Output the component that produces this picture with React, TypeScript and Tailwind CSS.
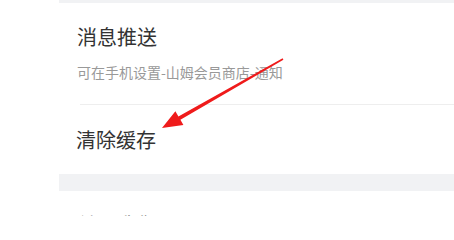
import React from "react";

export default function App() {
  return (
    <div
      className="relative w-[454px] h-[216px] overflow-hidden bg-white flex items-start"
      style={{ fontFamily: '"Noto Sans CJK SC", "Noto Sans", sans-serif' }}
    >
      <div className="w-[59px] shrink-0 bg-white" />
      <div className="flex-1 flex flex-col">
        <div className="h-[3px] shrink-0 bg-[#f1f2f4]" />
        <div className="shrink-0 pt-[24px] pl-[18px]">
          <div className="text-[20px] leading-[20px] text-[#333333]">消息推送</div>
          <div className="mt-[18px] text-[14px] leading-[14px] text-[#999999]">
            可在手机设置-山姆会员商店-通知
          </div>
        </div>
        <div className="shrink-0 mt-[25px] ml-[21px] h-px bg-[#eeeeee]" />
        <div className="shrink-0 pt-[25px] pl-[17px]">
          <div className="text-[20px] leading-[20px] text-[#333333]">清除缓存</div>
        </div>
        <div className="shrink-0 mt-[24px] h-[17px] bg-[#f1f2f4]" />
        <div className="shrink-0 pt-[24px] pl-[18px]">
          <div className="text-[20px] leading-[20px] text-[#333333]">关于我们</div>
        </div>
      </div>
      <svg
        className="absolute left-0 top-0 pointer-events-none"
        width="454"
        height="216"
        viewBox="0 0 454 216"
      >
        <polygon
          points="282.6,58.3 178.4,116.4 175.4,111.2 162,128 183.4,125 180.4,119.8 283.4,59.7"
          fill="#ef1b1b"
        />
      </svg>
    </div>
  );
}
